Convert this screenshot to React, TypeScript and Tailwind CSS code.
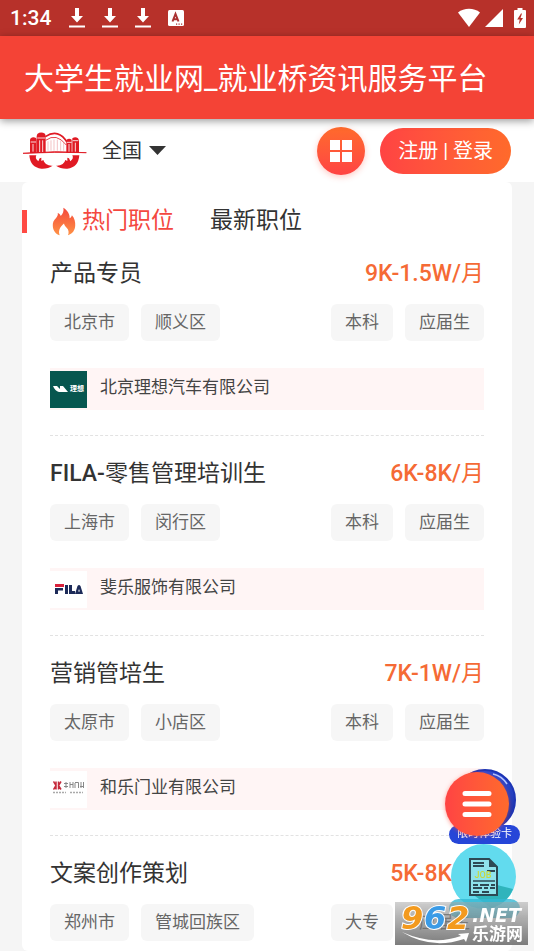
/**
 * App.tsx — mobile job board: status bar, app title, site toolbar,
 * job list and the floating buttons in the bottom right corner.
 */
import React, { useState } from 'react';

interface Job {
  id: number;
  title: string;
  salary: string;
  places: string[];
  demands: string[];
  company?: string;
  logo?: React.ReactNode;
}

const DownloadIcon = () => (
  <svg width="16" height="22" viewBox="0 0 16 22" fill="#fff" aria-hidden="true">
    <path d="M6 1h4v8h4l-6 6.500L2 9h4z" />
    <rect x="0" y="18.500" width="16" height="2" />
  </svg>
);

const StatusBar = () => (
  <div className="flex h-9 items-center bg-[#b7312a] pr-2 pl-2.5 text-white">
    <span className="w-[59px] text-[21px] leading-6 font-medium">1:34</span>
    <div className="flex items-center gap-[17px]">
      <DownloadIcon />
      <DownloadIcon />
      <DownloadIcon />
      <svg width="16" height="16" viewBox="0 0 16 16" aria-hidden="true">
        <rect width="16" height="16" rx="1.500" fill="#fff" />
        <path d="M4.500 11.500 7.500 4 10.500 11.500M5.500 9.300h4" fill="none" stroke="#a33" strokeWidth="2" />
        <path d="M8 14.200h1.200M10.500 14.200h1.200M13 14.200h1.200" stroke="#a33" strokeWidth="1.300" />
      </svg>
    </div>
    <div className="ml-auto flex items-center">
      <svg width="24" height="20" viewBox="0 0 24 20" fill="#fff" aria-hidden="true">
        <path d="M1 4.500C7-.5 17-.5 23 4.500L12 19z" />
      </svg>
      <svg className="ml-1" width="18" height="20" viewBox="0 0 18 20" fill="#fff" aria-hidden="true">
        <path d="M18 1v18H0z" />
      </svg>
      <svg className="ml-[11px]" width="12" height="20" viewBox="0 0 12 20" aria-hidden="true">
        <path d="M3.500 0h5v2H11a1 1 0 0 1 1 1v16a1 1 0 0 1-1 1H1a1 1 0 0 1-1-1V3a1 1 0 0 1 1-1h2.500z" fill="#fff" />
        <path d="M7 5.500 3.200 11.500h2.500L4.800 16.500l4.200-6.500H6.500L8 5.500z" fill="#b7312a" />
      </svg>
    </div>
  </div>
);

// Bridge over two cupped hands
const SiteLogo = () => (
  <svg width="64" height="40" viewBox="69 45 192 120" aria-hidden="true">
    <g fill="#e01a24">
      <path d="M91 68q8-7 17-2l2 5v40H90V72z" />
      <path d="M112 54q10-8 23-1l2 7v51h-27V60z" />
      <path d="M199 72q8-7 16-1v40h-16z" />
      <path d="M217 67q9-7 17 0l3 6v38h-20z" />
      <path d="M69 112q95-9 190-2-95-3-190 2" stroke="#e01a24" strokeWidth="2.500" />
      <path d="M88 118h21q-5 10 6 18l4-9 5-2v10l6-3q2 8 8 12 9 6 20 5-14 10-34 9-33-3-36-40z" />
      <path d="M238 118h-21q5 10-6 18l-4-9-5-2v10l-6-3q-2 8-8 12-9 6-20 5 14 10 34 9 33-3 36-40z" />
    </g>
    <path d="M136 62q40-26 66 18" fill="none" stroke="#e01a24" strokeWidth="5" />
    <path d="M137 73q32-24 62 14" fill="none" stroke="#e01a24" strokeWidth="2.500" />
    <path d="M144 76v28M153 73v31M162 71v33M172 71v33M182 74v30M191 81v23" stroke="#f0b6b8" strokeWidth="2.500" />
    <path
      d="M99 84v23M92 78h16M119 73v35M128 73v35M112 66h24M207 84v23M200 79h15M226 80v27M218 74h17"
      stroke="#fff"
      strokeWidth="2.500"
    />
  </svg>
);

const Toolbar = () => (
  <div className="flex h-[63px] items-center bg-white pr-[23px] pl-[23px]">
    <a href="#home" aria-label="首页">
      <SiteLogo />
    </a>
    <label className="relative ml-[15px] flex items-center">
      <select
        aria-label="地区"
        className="w-[66px] appearance-none bg-transparent text-[20px] leading-7 text-[#333] outline-none"
      >
        <option>全国</option>
      </select>
      <svg className="pointer-events-none absolute right-0.5" width="17" height="9" viewBox="0 0 17 9" aria-hidden="true">
        <path d="M0 0h17L8.500 9z" fill="#333" />
      </svg>
    </label>
    <button
      type="button"
      aria-label="应用"
      className="ml-auto flex h-12 w-12 items-center justify-center rounded-full bg-linear-to-t from-[#ff4343] to-[#ff6a2b] shadow-[0_2px_6px_rgba(255,80,60,0.3)]"
    >
      <svg width="22" height="22" viewBox="0 0 22 22" fill="#fff" aria-hidden="true">
        <path d="M0 0h10v10H0zM12 0h10v10H12zM0 12h10v10H0zM12 12h10v10H12z" />
      </svg>
    </button>
    <button
      type="button"
      className="ml-[15px] h-[46px] rounded-full bg-linear-to-r from-[#ff4343] to-[#ff6a2b] px-[18px] text-[20px] leading-7 text-white"
    >
      注册 | 登录
    </button>
  </div>
);

const Flame = () => (
  <svg width="24" height="29" viewBox="155 272 72 88" aria-hidden="true">
    <defs>
      <linearGradient id="flame" x1="0" y1="0" x2="0" y2="1">
        <stop offset="0" stopColor="#f4473a" />
        <stop offset="1" stopColor="#ff9346" />
      </linearGradient>
    </defs>
    <path
      d="M189 274c13 8 20 20 19 32 4-1 6-5 7-9 8 9 11 20 10 32-1 14-8 24-22 29 4-9 2-17-4-23-4-4-7-8-8-13-7 6-12 12-14 19-2 6-1 11 1 17-13-4-20-14-21-28-1-11 3-18 10-25 5-6 6-10 5-15 5 2 8 5 9 9 7-7 10-15 8-25z"
      fill="url(#flame)"
    />
  </svg>
);

const LixiangLogo = () => (
  <div className="flex h-[37px] w-[37px] items-center justify-center gap-0.5 bg-[#07564f] text-white">
    <svg width="15" height="8" viewBox="0 0 15 8" fill="#fff" aria-hidden="true">
      <path d="M0 1h4l3 3V1h3l5 6H6Q2 6 0 1z" />
    </svg>
    <span className="text-[7px] leading-3 font-bold">理想</span>
  </div>
);

const FilaLogo = () => (
  <div className="flex h-[37px] w-[37px] items-center justify-center bg-white">
    <svg width="28" height="10" viewBox="0 0 28 10" aria-hidden="true">
      <path d="M0 0h9v3H0z" fill="#d8213b" />
      <path d="M0 4h8v2.500H3V10H0zM10 1h3v9h-3zM14 1h3v6h3v3h-6zM20 10l2.500-8q1.500-2 3 0L28 10zm3.200-2.500h1.700L24 5z" fill="#1d2b59" fillRule="evenodd" />
    </svg>
  </div>
);

const HeleLogo = () => (
  <div className="flex h-[37px] w-[37px] items-start justify-center bg-white pt-2.5">
    <svg width="31" height="13" viewBox="0 0 31 13" aria-hidden="true">
      <path d="M.5.500 3 4.500.5 8.500M8 .500 5.500 4.500 8 8.500M3 .500v8M5.500.500v8" fill="none" stroke="#c52a3c" strokeWidth="1.500" />
      <path
        d="M11 2.500h4M13 1v6M11 5.500h4M17 1v6M17 3.500h3M20 1v6M22 2v5M22 1.500h3.500V7M28 1v6M30.500 1v6M27 5.500h4"
        fill="none"
        stroke="#888"
      />
      <path d="M0 11.500h13M17 11.500h13" stroke="#aaa" strokeWidth="1.500" strokeDasharray="2 1" />
    </svg>
  </div>
);

const JOBS: Job[] = [
  {
    id: 1,
    title: '产品专员',
    salary: '9K-1.5W/月',
    places: ['北京市', '顺义区'],
    demands: ['本科', '应届生'],
    company: '北京理想汽车有限公司',
    logo: <LixiangLogo />,
  },
  {
    id: 2,
    title: 'FILA-零售管理培训生',
    salary: '6K-8K/月',
    places: ['上海市', '闵行区'],
    demands: ['本科', '应届生'],
    company: '斐乐服饰有限公司',
    logo: <FilaLogo />,
  },
  {
    id: 3,
    title: '营销管培生',
    salary: '7K-1W/月',
    places: ['太原市', '小店区'],
    demands: ['本科', '应届生'],
    company: '和乐门业有限公司',
    logo: <HeleLogo />,
  },
  {
    id: 4,
    title: '文案创作策划',
    salary: '5K-8K/月',
    places: ['郑州市', '管城回族区'],
    demands: ['大专', '应届生'],
  },
];

// Latin letters and digits are medium, Chinese stays regular
const MixedText = ({ text }: { text: string }) => (
  <>
    {text.split(/([\x21-\x7e]+)/).filter(Boolean).map((part, i) => (
      <span key={i} className={/^[\x21-\x7e]/.test(part) ? 'font-medium' : 'font-normal'}>{part}</span>
    ))}
  </>
);

const Tag = ({ text }: { text: string }) => (
  <span className="rounded-md bg-[#f6f6f6] px-3.5 py-1.5 text-[17px] leading-[25px] text-[#666]">{text}</span>
);

const JobItem = ({ job }: { job: Job }) => (
  <li className="border-b border-dashed border-[#e2e2e2] pt-[22px] pb-[25px] last:border-0 last:pb-2.5">
    <div className="flex justify-between text-[23px] leading-8">
      <a href={`#job-${job.id}`} className="text-[#333]">
        <MixedText text={job.title} />
      </a>
      <span className="text-[#f56a35]">
        <MixedText text={job.salary} />
      </span>
    </div>
    <div className="mt-3.5 flex justify-between">
      <div className="flex gap-3">
        {job.places.map(p => <Tag key={p} text={p} />)}
      </div>
      <div className="flex gap-3">
        {job.demands.map(d => <Tag key={d} text={d} />)}
      </div>
    </div>
    {job.company && (
      <a href={`#company-${job.id}`} className="mt-[27px] flex h-[42px] items-center gap-[13px] bg-[#fff5f5] text-[17px] leading-6 text-[#444]">
        {job.logo}
        <span className="pb-1">{job.company}</span>
      </a>
    )}
  </li>
);

const FloatingButtons = () => (
  <div className="fixed right-3.5 bottom-[33px] flex w-[71px] flex-col items-center">
    {/* menu button lies over the blue trial card badge */}
    <a
      href="#trial"
      className="relative flex h-[75px] w-full flex-col items-center justify-end"
    >
      <span className="absolute top-0 right-1 h-[62px] w-[62px] rounded-full border-2 border-[#1d35b5] bg-linear-to-b from-[#2c4ad6] to-[#1a2f9e]" />
      <svg className="absolute top-1 right-3" width="16" height="14" viewBox="0 0 16 14" aria-hidden="true">
        <path d="M1 1Q10 3 15 11" fill="none" stroke="#b9c8ff" strokeWidth="1.500" />
      </svg>
      <span className="relative h-[19px] w-full rounded-full bg-[#2646d8] text-center text-[11px] leading-[18px] text-white">
        限时体验卡
      </span>
    </a>
    <button
      type="button"
      aria-label="菜单"
      className="absolute top-[3px] -left-1 flex h-16 w-16 items-center justify-center rounded-full bg-linear-to-r from-[#ff4343] to-[#ff6a2b] shadow-[0_1px_4px_rgba(255,80,60,0.5)]"
    >
      <svg width="30" height="28" viewBox="0 0 30 28" aria-hidden="true">
        <path d="M3 3.500h24M3 14h24M3 24.500h24" stroke="#fff" strokeWidth="5" strokeLinecap="round" />
      </svg>
    </button>
    <a href="#resume" aria-label="简历" className="relative flex h-[74px] w-full flex-col items-center justify-end">
      <svg className="absolute top-0 right-1" width="65" height="65" viewBox="0 0 65 65">
        <circle cx="32.500" cy="32.500" r="32.500" fill="#62dbee" />
        <path d="M46 41 62 45Q56 60 40 64L24 52z" fill="#2fb4bc" />
        <path d="M19 15h19l8 8v28H19z" fill="#8fe3ec" stroke="#2d4954" strokeWidth="2" />
        <path d="M38 15v8h8z" fill="#2d4954" />
        <path d="M22 19h11M22 22h11M36 27h8M22 41h5M29 41h9M40 41h4M22 44h9M33 44h4M39 44h5M22 48h6M31 48h7" stroke="#2d4954" strokeWidth="2" />
        <path d="M22 37h22" stroke="#2d4954" strokeWidth="1.500" />
        <text x="32" y="34" textAnchor="middle" fontSize="9" fontWeight="500" fill="#c8d93c">JOB</text>
      </svg>
      <span className="relative h-[19px] w-full rounded-full bg-[#35b9d4]/80" />
    </a>
  </div>
);

const SiteStamp = () => (
  <div className="pointer-events-none fixed right-1.5 bottom-1.5 h-[43px] w-[133px] bg-linear-to-b from-[#a5a5a5]/50 to-[#666]/85">
    <svg width="133" height="43" viewBox="0 0 133 43">
      <g fontFamily="DejaVu Sans, sans-serif" fontStyle="italic" fontWeight="700" fontSize="32" stroke="#fff" strokeWidth="2" paintOrder="stroke">
        <text x="6" y="27" fill="#f39a1e">9</text>
        <text x="29" y="27" fill="#3b9be6">6</text>
        <text x="52" y="27" fill="#f39a1e">2</text>
      </g>
      <path d="M7 30Q38 44 66 34l-3-2 11-1-3 9-2-3Q36 48 7 30z" fill="#fff" />
      <text x="77" y="20" fill="#fff" fontFamily="DejaVu Sans, sans-serif" fontWeight="700" fontStyle="italic" fontSize="19">.NET</text>
      <text x="77" y="38" fill="#fff" fontFamily="Noto Sans CJK SC, sans-serif" fontWeight="700" fontSize="17">乐游网</text>
    </svg>
  </div>
);

const TABS = ['热门职位', '最新职位'];

export default function App() {
  const [tab, setTab] = useState(0);

  return (
    <div className="min-h-screen bg-[#f5f5f5] font-['Roboto','Noto_Sans_CJK_SC',sans-serif]">
      <StatusBar />
      <header className="relative z-10 flex h-[83px] items-center bg-[#f44336] px-6 pt-0.5 shadow-[0_2px_8px_rgba(0,0,0,0.4)]">
        <h1 className="text-[30px] leading-10 text-white">大学生就业网_就业桥资讯服务平台</h1>
      </header>
      <Toolbar />
      <main className="mx-[22px] rounded-md bg-white">
        <div className="flex items-center pt-6">
          <span className="h-[23px] w-[5px] bg-[#ff4a43]" />
          <div className="ml-[25px] flex items-center gap-9">
            {TABS.map((name, i) => (
              <button
                key={name}
                type="button"
                onClick={() => setTab(i)}
                className={`flex items-center gap-1.5 text-[23px] leading-[30px] ${i === tab ? 'text-[#f4483f]' : 'text-[#333]'}`}
              >
                {i === tab && <Flame />}
                {name}
              </button>
            ))}
          </div>
        </div>
        <ul className="px-7">
          {JOBS.map(job => <JobItem key={job.id} job={job} />)}
        </ul>
      </main>
      <FloatingButtons />
      <SiteStamp />
    </div>
  );
}
